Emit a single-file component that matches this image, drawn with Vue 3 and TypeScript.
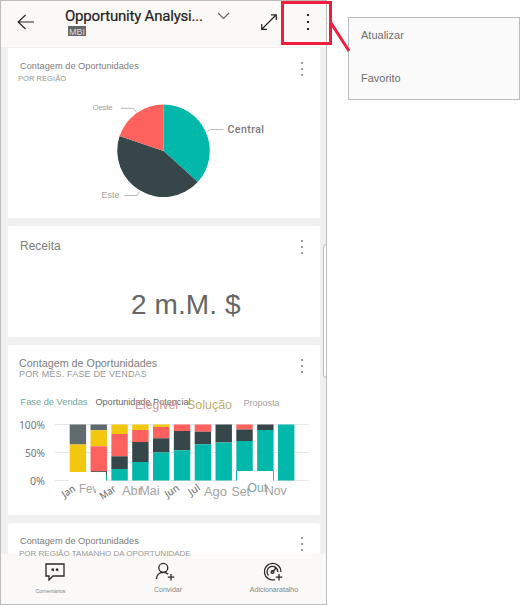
<script setup lang="ts">
interface Segment { tone: string; from: number; to: number }
interface Bar { x: number; segments: Segment[] }
interface Label { text: string; x: number; y: number; size: number; width: number; tone: string }

const edges: [string, number[]][][] = [
  [['grey', [424.5, 444.5]], ['yellow', [444.5, 472]]],
  [['grey', [424.5, 430.3]], ['yellow', [430.3, 446.3]], ['red', [446.3, 471.5]]],
  [['yellow', [424.5, 434]], ['red', [434, 456.3]], ['dark', [456.3, 469]], ['teal', [469, 480.5]]],
  [['yellow', [424.5, 430]], ['red', [430, 442]], ['dark', [442, 462]], ['teal', [462, 480.5]]],
  [['yellow', [424.5, 427]], ['red', [427, 438.3]], ['dark', [438.3, 452.5]], ['teal', [452.5, 480.5]]],
  [['red', [424.5, 431]], ['dark', [431, 450.3]], ['teal', [450.3, 480.5]]],
  [['red', [424.5, 431.7]], ['dark', [431.7, 444.3]], ['teal', [444.3, 480.5]]],
  [['dark', [424.5, 442.5]], ['teal', [442.5, 480.5]]],
  [['red', [424.5, 429.5]], ['dark', [429.5, 441]], ['teal', [441, 471]]],
  [['dark', [424.5, 430]], ['teal', [430, 471]]],
  [['teal', [424.5, 480.5]]],
]

const bars: Bar[] = edges.map((parts, i) => ({
  x: 69.7 + i * 20.83,
  segments: parts.map(([tone, [from, to]]) => ({ tone, from, to })),
}))

const ticks = [
  { text: '100%', y: 424.5, x: 19, width: 26 },
  { text: '50%', y: 452.5, x: 25, width: 20 },
  { text: '0%', y: 480.5, x: 30, width: 15 },
]

const labels: Label[] = [
  { text: 'Fase de Vendas', x: 20.5, y: 405, size: 9, width: 67, tone: 't-teal' },
  { text: 'Oportunidade Potencial', x: 95.5, y: 405, size: 8.5, width: 95, tone: 't-ink' },
  { text: 'Elegível', x: 135, y: 409, size: 12, width: 43, tone: 't-rose' },
  { text: 'Solução', x: 187, y: 409, size: 12, width: 45, tone: 't-gold' },
  { text: 'Proposta', x: 243.5, y: 406, size: 9, width: 36, tone: 't-soft' },
  { text: 'Fev', x: 79, y: 493, size: 12, width: 19, tone: 't-soft' },
  { text: 'Abr', x: 122, y: 495, size: 12, width: 20, tone: 't-soft' },
  { text: 'Mai', x: 139.5, y: 495, size: 12, width: 20, tone: 't-soft' },
  { text: 'Ago', x: 204, y: 496, size: 12, width: 23, tone: 't-soft' },
  { text: 'Set', x: 231.5, y: 496, size: 12, width: 18.5, tone: 't-soft' },
  { text: 'Out', x: 247.5, y: 492, size: 12, width: 19.5, tone: 't-teal' },
  { text: 'Nov', x: 265, y: 495, size: 12, width: 21.5, tone: 't-soft' },
]

const tilted: Label[] = [
  { text: 'Jan', x: 64.5, y: 498, size: 10, width: 14, tone: 't-mid' },
  { text: 'Mar', x: 102.5, y: 500, size: 10, width: 17, tone: 't-mid' },
  { text: 'Jun', x: 167.5, y: 498, size: 10, width: 15, tone: 't-mid' },
  { text: 'Jul', x: 191, y: 496, size: 10, width: 12, tone: 't-mid' },
]
</script>

<template>
  <div class="screen">
    <div class="phone">
      <header class="topbar">
        <svg class="back" width="18" height="16" viewBox="0 0 18 16"><path d="M8.5 1 1.2 8l7.3 7M1.2 8H17" /></svg>
        <div class="heading">
          <span class="title">Opportunity Analysi...</span>
          <span class="owner">MBI</span>
        </div>
        <svg class="chevron" width="13" height="8" viewBox="0 0 13 8"><path d="m1 1 5.5 5.5L12 1" /></svg>
        <svg class="expand" width="18" height="18" viewBox="0 0 18 18"><path d="m2 16 14-14M11 1.8h5.300v5.300M1.700 11v5.300H7" /></svg>
        <span class="dots strong"><i /><i /><i /></span>
      </header>

      <main class="feed">
        <section class="card regions">
          <div class="card-head">
            <div class="names"><h2>Contagem de Oportunidades</h2><p>POR REGIÃO</p></div>
            <span class="dots"><i /><i /><i /></span>
          </div>
          <svg class="plot" width="312" height="120" viewBox="8 88 312 120">
            <path class="teal" d="M163.5 151V104.5A46.4 46.4 0 0 1 197.8 182Z" />
            <path class="dark" d="M163.5 151 197.8 182A46.4 46.4 0 0 1 119.6 136Z" />
            <path class="red" d="M163.5 151 119.6 136A46.4 46.4 0 0 1 163.5 104.5Z" />
            <path class="leader" d="M121 108.3h12.5l3 4M207 131.5l3.5-2H223.500M124.500 195.500H137l2.500-4" />
            <text class="t-soft" x="92.500" y="110" font-size="8" textLength="20">Oeste</text>
            <text class="t-soft" x="101.500" y="198" font-size="9" textLength="18">Este</text>
            <text class="central" x="227.500" y="133" font-size="10.500" textLength="36.500">Central</text>
          </svg>
        </section>

        <section class="card revenue">
          <div class="card-head">
            <div class="names"><h2>Receita</h2></div>
            <span class="dots"><i /><i /><i /></span>
          </div>
          <strong class="amount">2 m.M. $</strong>
        </section>

        <section class="card months">
          <div class="card-head">
            <div class="names"><h2>Contagem de Oportunidades</h2><p>POR MÊS. FASE DE VENDAS</p></div>
            <span class="dots"><i /><i /><i /></span>
          </div>
          <svg class="plot" width="312" height="125" viewBox="8 387 312 125">
            <g v-for="t in ticks" :key="t.text">
              <line class="grid" x1="55" x2="309" :y1="t.y" :y2="t.y" />
              <text class="tick" :x="t.x" :y="t.y + 4" font-size="10.500" :textLength="t.width" lengthAdjust="spacingAndGlyphs">{{ t.text }}</text>
            </g>
            <path class="patch" d="M69 472h37v10H69zM237 471h36v11h-36z" />
            <g v-for="b in bars" :key="b.x">
              <rect v-for="s in b.segments" :key="s.from" :class="s.tone" :x="b.x" :y="s.from" width="16.400" :height="s.to - s.from" />
            </g>
            <path class="dark" d="M91 471h15.500v.7H91zM106 471h1v4h-1z" />
            <path class="teal" d="M106 475h1v5.500h-1zM236 471h1v9.500h-1zM273 471h.8v9.500H273z" />
            <text
              v-for="l in labels" :key="l.text" :class="l.tone"
              :x="l.x" :y="l.y" :font-size="l.size" :textLength="l.width" lengthAdjust="spacingAndGlyphs"
            >{{ l.text }}</text>
            <path class="patch" d="M96 482h5v12h-5z" />
            <text
              v-for="l in tilted" :key="l.text" :class="[l.tone, 'tilted']"
              :x="l.x" :y="l.y" :font-size="l.size" :textLength="l.width" lengthAdjust="spacingAndGlyphs"
              :transform="`rotate(-34 ${l.x} ${l.y})`"
            >{{ l.text }}</text>
          </svg>
        </section>

        <section class="card sizes">
          <div class="card-head">
            <div class="names"><h2>Contagem de Oportunidades</h2><p>POR REGIÃO TAMANHO DA OPORTUNIDADE</p></div>
            <span class="dots"><i /><i /><i /></span>
          </div>
        </section>
      </main>

      <footer class="actions">
        <div class="action comments">
          <svg width="20" height="20" viewBox="0 0 20 20"><path d="M1 2h18v12H8l-4 4v-4H1z" /><path class="solid" d="M6.500 6.500h2.500v3l-1-.8H6.500zM10.800 6.500h2.500v3l-1-.8h-1.500z" /></svg>
          <span>Comentários</span>
        </div>
        <div class="action invite">
          <svg width="20" height="20" viewBox="0 0 20 20"><circle cx="8.300" cy="5.800" r="4.500" /><path d="M1.500 17c0-4 2.700-6.700 6.800-6.700 2.200 0 3.800.8 4.900 2M16 12v6.500M12.800 15.200h6.500" /></svg>
          <span>Convidar</span>
        </div>
        <div class="action shortcut">
          <svg width="20" height="20" viewBox="0 0 20 20"><path d="M12 17.600A8.300 8.300 0 1 1 18 10M5.500 13.500a5.400 5.400 0 1 1 9.300-3.500M9.500 10l4-4.500M16 12v6.500M12.800 15.200h6.500" /><circle cx="9.500" cy="10" r="1.400" /></svg>
          <span>Adicionaratalho</span>
        </div>
      </footer>
      <div class="scroll" />
    </div>

    <aside class="menu">
      <span>Atualizar</span>
      <span>Favorito</span>
    </aside>
    <svg class="callout" width="70" height="54" viewBox="281 0 70 54">
      <path d="M282.500 2.500h48v41h-48zM331 23l18 28" />
    </svg>
  </div>
</template>

<style>
body { margin: 0; background: #fff; }
</style>

<style scoped>
* { box-sizing: border-box; }
.screen { position: relative; display: flex; align-items: flex-start; width: 520px; height: 605px; overflow: hidden; font-family: "Liberation Sans", Arial, sans-serif; color: #888; }
.phone { position: relative; display: flex; flex-direction: column; width: 327px; height: 605px; border: 1px solid #bdbdbd; background: #f0f0f0; }
.topbar { display: flex; align-items: flex-start; flex: none; height: 46px; padding-left: 16px; background: #faf9f8; }
svg { display: block; flex: none; }
.topbar svg path { fill: none; stroke: #262626; stroke-width: 1.2; }
.back { margin-top: 13px; }
.heading { display: flex; flex-direction: column; align-items: flex-start; width: 145px; margin: 6px 0 0 30px; }
.title { font: 15px/19px Roboto, sans-serif; letter-spacing: -.2px; color: #222; white-space: nowrap; -webkit-text-stroke: .2px #222; }
.owner { height: 10px; margin: 0 0 0 3px; padding: 0 1px; background: #666; color: #ddd; font-size: 9px; line-height: 12px; overflow: hidden; }
.chevron { margin: 11px 0 0 7px; }
.topbar .chevron path { stroke: #666; }
.expand { margin: 12px 0 0 30px; }
.dots { display: flex; flex-direction: column; gap: 4px; width: 2px; }
.dots i { width: 2px; height: 2px; background: #999; }
.dots.strong { gap: 5px; margin: 13px 0 0 29px; }
.dots.strong i { background: #222; }
.feed { display: flex; flex-direction: column; gap: 8px; flex: 1; min-height: 0; padding: 1px 6px 0 7px; }
.card { flex: none; border-radius: 2px; background: #fff; }
.card-head { display: flex; justify-content: space-between; height: 40px; padding: 12px 17px 0 12px; }
.card-head .dots { margin-top: 2px; }
.names { display: flex; flex-direction: column; white-space: nowrap; }
h2, p { margin: 0; font-weight: 400; }
h2 { font-size: 9.25px; line-height: 12px; color: #7d7d7d; }
p { font-size: 7.6px; line-height: 13px; color: #989898; }
.regions { height: 170px; }
.regions p { margin-left: -2px; }
.revenue { display: flex; flex-direction: column; height: 111px; }
.revenue h2 { font-size: 12px; line-height: 17px; }
.amount { margin: 22px 0 0 123px; font-size: 28px; line-height: 34px; letter-spacing: .1px; font-weight: 400; color: #666; }
.months { height: 170px; }
.months .card-head { height: 42px; padding-left: 11px; }
.months h2 { font-size: 10.75px; }
.months p { font-size: 9px; line-height: 11px; letter-spacing: .17px; }
.sizes { height: 31px; }
.sizes p { position: relative; z-index: 1; margin-left: -1px; font-size: 8px; }
.plot { overflow: hidden; }
.teal { fill: #01b8aa; }
.dark { fill: #374649; }
.red { fill: #fd625e; }
.yellow { fill: #f2c80f; }
.grey { fill: #5f6b6d; }
.patch { fill: #fff; }
.leader { fill: none; stroke: #bbb; stroke-width: 1; }
.grid { stroke: #e8e8e8; }
.tick { fill: #777; font-family: "Noto Sans", sans-serif; }
.central { fill: #777; font-family: Roboto, sans-serif; font-weight: 500; }
.t-soft { fill: #a2a2a2; }
.t-mid { fill: #777; }
.t-ink { fill: #666; }
.t-teal { fill: #75a5a1; }
.t-rose { fill: #cf9695; }
.t-gold { fill: #bdb070; }
.tilted { font-family: "Noto Sans", sans-serif; font-weight: 500; }
.actions { display: flex; flex: none; height: 50px; background: #faf9f8; }
.action { display: flex; flex-direction: column; align-items: center; padding-top: 8px; }
.action svg path, .action svg circle { fill: none; stroke: #292929; stroke-width: 1.3; }
.action svg .solid { fill: #292929; stroke: none; }
.action span { font-size: 7px; line-height: 10px; margin-top: 3px; color: #858585; white-space: nowrap; }
.comments { width: 108px; }
.comments svg { margin-right: 1px; }
.comments span { font-size: 5.3px; margin: 4px 9px 0 0; }
.invite { width: 118px; }
.invite svg { margin-right: 7px; }
.shortcut { width: 94px; }
.shortcut svg { margin-right: 3px; }
.scroll { position: absolute; right: -1px; top: 243px; width: 4px; height: 134px; border: 1px solid #bdbdbd; border-radius: 4px 0 0 4px; background: #fff; }
.menu { display: flex; flex-direction: column; gap: 27px; width: 172px; height: 83px; margin: 17px 0 0 21px; padding: 9px 12px; border: 1px solid #bbb; background: #fafafa; color: #6d6d6d; font-size: 11px; line-height: 16px; }
.callout { position: absolute; left: 281px; top: 0; }
.callout path { fill: none; stroke: #f01e3c; stroke-width: 3; }
</style>
